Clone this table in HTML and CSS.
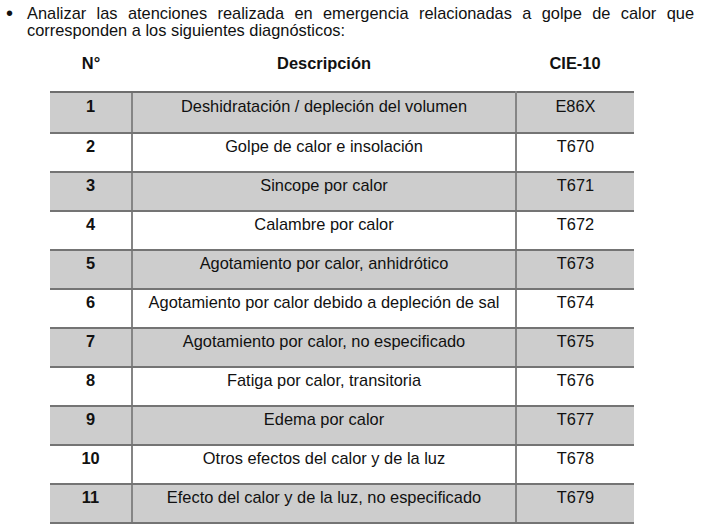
FILE: index.html
```html
<!DOCTYPE html>
<html lang="es">
<head>
<meta charset="utf-8">
<link rel="stylesheet" href="styles.css">
</head>
<body>
<div class="intro">
  <span class="bullet">&bull;</span>
  <p class="intro-text">Analizar las atenciones realizada en emergencia relacionadas a golpe de calor que corresponden a los siguientes diagnósticos:</p>
</div>
<table class="diag">
  <thead>
    <tr><th class="c-num">N°</th><th class="c-desc">Descripción</th><th class="c-code">CIE-10</th></tr>
  </thead>
  <tbody>
    <tr class="shade first"><td class="c-num">1</td><td class="c-desc">Deshidratación / depleción del volumen</td><td class="c-code">E86X</td></tr>
    <tr><td class="c-num">2</td><td class="c-desc">Golpe de calor e insolación</td><td class="c-code">T670</td></tr>
    <tr class="shade"><td class="c-num">3</td><td class="c-desc">Sincope por calor</td><td class="c-code">T671</td></tr>
    <tr><td class="c-num">4</td><td class="c-desc">Calambre por calor</td><td class="c-code">T672</td></tr>
    <tr class="shade"><td class="c-num">5</td><td class="c-desc">Agotamiento por calor, anhidrótico</td><td class="c-code">T673</td></tr>
    <tr><td class="c-num">6</td><td class="c-desc">Agotamiento por calor debido a depleción de sal</td><td class="c-code">T674</td></tr>
    <tr class="shade"><td class="c-num">7</td><td class="c-desc">Agotamiento por calor, no especificado</td><td class="c-code">T675</td></tr>
    <tr><td class="c-num">8</td><td class="c-desc">Fatiga por calor, transitoria</td><td class="c-code">T676</td></tr>
    <tr class="shade"><td class="c-num">9</td><td class="c-desc">Edema por calor</td><td class="c-code">T677</td></tr>
    <tr><td class="c-num">10</td><td class="c-desc">Otros efectos del calor y de la luz</td><td class="c-code">T678</td></tr>
    <tr class="shade"><td class="c-num">11</td><td class="c-desc">Efecto del calor y de la luz, no especificado</td><td class="c-code">T679</td></tr>
  </tbody>
</table>
</body>
</html>
```
FILE: styles.css
```css
html, body {
  margin: 0;
  padding: 0;
  background: #ffffff;
}
body {
  font-family: "Liberation Sans", Arial, sans-serif;
  font-size: 16.4px;
  color: #111111;
  width: 708px;
}
.intro {
  display: flex;
  padding: 5px 14px 0 0;
}
.bullet {
  width: 21px;
  padding-left: 6px;
  line-height: 17px;
  font-size: 20px;
}
.intro-text {
  margin: 0;
  flex: 1;
  line-height: 17px;
  text-align: justify;
}
.diag {
  border-collapse: collapse;
  margin: 16px 0 0 50px;
  width: 584px;
  table-layout: fixed;
}
.c-num { width: 82px; }
.c-desc { width: 384px; }
.c-code { width: 118px; }
.diag th {
  font-weight: bold;
  text-align: center;
  padding: 0 0 19px 0;
  line-height: 17px;
  vertical-align: top;
}
.diag td {
  text-align: center;
  vertical-align: top;
  height: 39px;
  box-sizing: border-box;
  padding: 4px 0 0 0;
  line-height: 17px;
  border-bottom: 2px solid #747474;
}
.diag td.c-num { font-weight: bold; }
.diag td.c-desc { border-left: 2px solid #858585; border-right: 2px solid #858585; }
.diag tr.first td { border-top: 2px solid #6e6e6e; height: 41px; padding-top: 5px; }
.diag tr.shade td { background: #cdcdcd; }
```
